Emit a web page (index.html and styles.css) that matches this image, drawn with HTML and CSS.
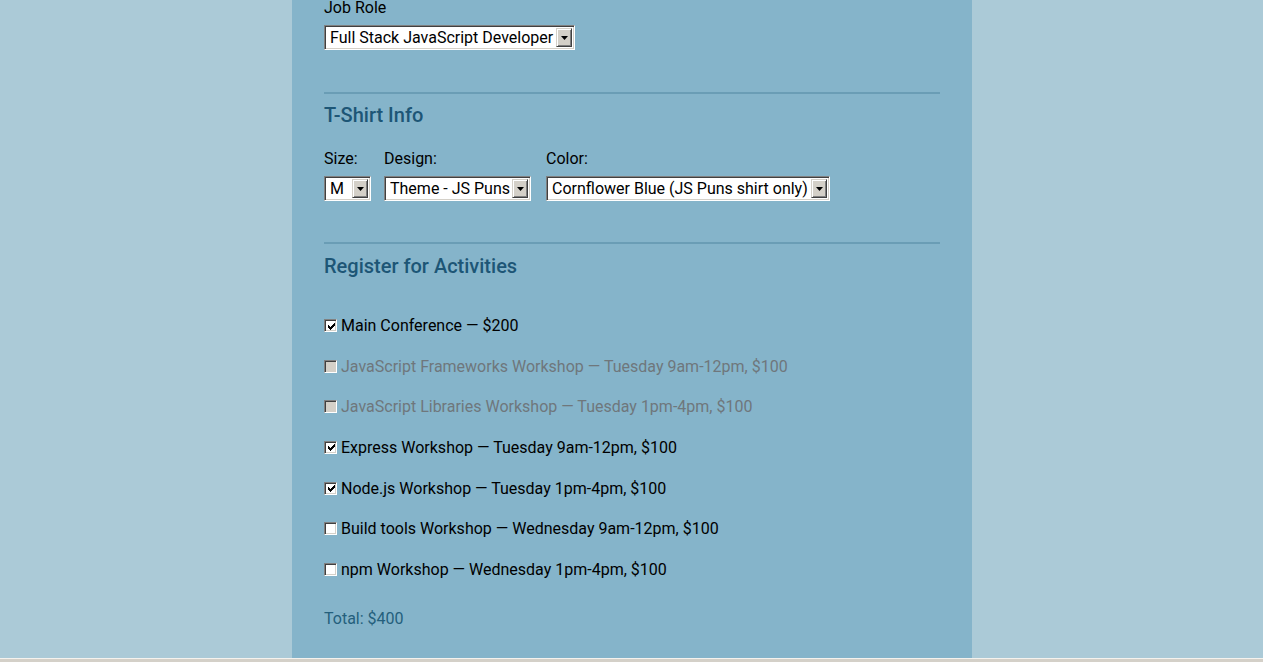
FILE: index.html
```html
<!DOCTYPE html>
<html lang="en">
<head>
<meta charset="utf-8">
<title>Registration</title>
<link rel="stylesheet" href="styles.css">
</head>
<body>
<div class="page">
  <div class="stage">
    <form class="column">
      <div class="field">
        <label class="label">Job Role</label>
        <div class="select w-role"><span class="value">Full Stack JavaScript Developer</span><span class="arrow"><svg width="7" height="4" viewBox="0 0 7 4"><path d="M0 0h7L3.5 4z" fill="#000"/></svg></span></div>
      </div>

      <hr class="rule">
      <h2 class="heading">T-Shirt Info</h2>
      <div class="shirt">
        <div class="field">
          <label class="label">Size:</label>
          <div class="select w-size"><span class="value">M</span><span class="arrow"><svg width="7" height="4" viewBox="0 0 7 4"><path d="M0 0h7L3.5 4z" fill="#000"/></svg></span></div>
        </div>
        <div class="field">
          <label class="label">Design:</label>
          <div class="select w-design"><span class="value">Theme - JS Puns</span><span class="arrow"><svg width="7" height="4" viewBox="0 0 7 4"><path d="M0 0h7L3.5 4z" fill="#000"/></svg></span></div>
        </div>
        <div class="field">
          <label class="label">Color:</label>
          <div class="select w-color"><span class="value">Cornflower Blue (JS Puns shirt only)</span><span class="arrow"><svg width="7" height="4" viewBox="0 0 7 4"><path d="M0 0h7L3.5 4z" fill="#000"/></svg></span></div>
        </div>
      </div>

      <hr class="rule rule-2">
      <h2 class="heading heading-2">Register for Activities</h2>
      <div class="activities">
        <label class="activity"><span class="box"><svg width="7" height="7" viewBox="0 0 7 7" shape-rendering="crispEdges"><path d="M6 0h1v3H6zM5 1h1v3H5zM4 2h1v3H4zM3 3h1v3H3zM2 4h1v3H2zM1 3h1v3H1zM0 2h1v3H0z" fill="#000"/></svg></span>Main Conference — $200</label>
        <label class="activity disabled"><span class="box"></span>JavaScript Frameworks Workshop — Tuesday 9am-12pm, $100</label>
        <label class="activity disabled"><span class="box"></span>JavaScript Libraries Workshop — Tuesday 1pm-4pm, $100</label>
        <label class="activity"><span class="box"><svg width="7" height="7" viewBox="0 0 7 7" shape-rendering="crispEdges"><path d="M6 0h1v3H6zM5 1h1v3H5zM4 2h1v3H4zM3 3h1v3H3zM2 4h1v3H2zM1 3h1v3H1zM0 2h1v3H0z" fill="#000"/></svg></span>Express Workshop — Tuesday 9am-12pm, $100</label>
        <label class="activity"><span class="box"><svg width="7" height="7" viewBox="0 0 7 7" shape-rendering="crispEdges"><path d="M6 0h1v3H6zM5 1h1v3H5zM4 2h1v3H4zM3 3h1v3H3zM2 4h1v3H2zM1 3h1v3H1zM0 2h1v3H0z" fill="#000"/></svg></span>Node.js Workshop — Tuesday 1pm-4pm, $100</label>
        <label class="activity"><span class="box"></span>Build tools Workshop — Wednesday 9am-12pm, $100</label>
        <label class="activity"><span class="box"></span>npm Workshop — Wednesday 1pm-4pm, $100</label>
      </div>
      <p class="total">Total: $400</p>
    </form>
  </div>
  <div class="scrollbar"></div>
</div>
</body>
</html>
```

FILE: styles.css
```css
html, body {
  margin: 0;
  padding: 0;
}
body {
  font-family: Roboto, "Liberation Sans", sans-serif;
  font-size: 16px;
  color: #000;
  background: #abcad7;
}
.page {
  height: 100vh;
  display: flex;
  flex-direction: column;
  overflow: hidden;
}
.stage {
  flex: 1;
  display: flex;
  justify-content: center;
  overflow: hidden;
}
.column {
  width: 680px;
  margin-left: 1px;
  background: #85b4ca;
  padding: 0 32px;
  box-sizing: border-box;
}
.field {
  display: flex;
  flex-direction: column;
}
.label {
  line-height: 18px;
  margin-top: -1px;
  margin-bottom: 8px;
}
.select {
  display: flex;
  align-items: center;
  box-sizing: border-box;
  height: 25px;
  background: #fff;
  border-top: 1px solid #808080;
  border-left: 1px solid #808080;
  border-right: 1px solid #fff;
  border-bottom: 1px solid #fff;
  box-shadow: inset 1px 1px 0 #404040, inset -1px -1px 0 #d4d0c8;
  padding: 2px 2px 2px 5px;
}
.select .value {
  flex: 1;
  white-space: nowrap;
  overflow: hidden;
  line-height: 19px;
}
.select .arrow {
  width: 16px;
  height: 19px;
  box-sizing: border-box;
  background: #d4d0c8;
  border-top: 1px solid #d4d0c8;
  border-left: 1px solid #d4d0c8;
  border-right: 1px solid #404040;
  border-bottom: 1px solid #404040;
  box-shadow: inset 1px 1px 0 #fff, inset -1px -1px 0 #808080;
  display: flex;
  align-items: center;
  justify-content: center;
}
.w-role { width: 251px; }
.w-size { width: 47px; }
.w-design { width: 147px; }
.w-color { width: 284px; }

.rule {
  border: 0;
  height: 2px;
  background: #6a9db5;
  margin: 42px 0 0;
}
.rule-2 {
  margin-top: 41px;
}
.heading {
  font-size: 20px;
  font-weight: 500;
  color: #1d5676;
  margin: 9px 0 0;
  line-height: 24px;
}
.heading-2 {
  margin-top: 10px;
}
.shirt {
  display: flex;
  gap: 13px;
  margin-top: 24px;
}
.shirt .field:nth-child(2) {
  margin-right: 2px;
}
.activities {
  display: flex;
  flex-direction: column;
  gap: 21.67px;
  margin-top: 38px;
}
.activity {
  display: flex;
  align-items: center;
  line-height: 19px;
}
.box {
  width: 13px;
  height: 13px;
  box-sizing: border-box;
  background: #fff;
  border-top: 1px solid #808080;
  border-left: 1px solid #808080;
  border-right: 1px solid #fff;
  border-bottom: 1px solid #fff;
  box-shadow: inset 1px 1px 0 #404040, inset -1px -1px 0 #d4d0c8;
  margin-right: 4px;
  display: flex;
  align-items: center;
  justify-content: center;
}
.box svg {
  margin: 1px 0 0 1px;
}
.disabled {
  color: #6f777c;
}
.disabled .box {
  background: #d4d0c8;
}
.total {
  margin: 30px 0 0;
  color: #245f7c;
  line-height: 19px;
}
.scrollbar {
  height: 4px;
  flex: none;
  background: #d4d0c8;
  border-top: 1px solid #f4f2ee;
  box-sizing: border-box;
}
```
